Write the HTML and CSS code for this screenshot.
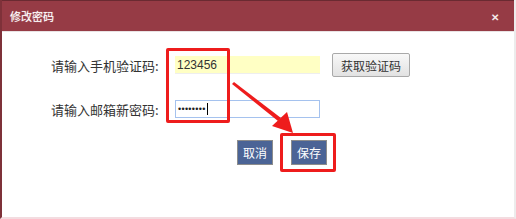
FILE: index.html
```html
<!DOCTYPE html>
<html lang="zh-CN">
<head>
  <meta charset="UTF-8" />
  <title>修改密码</title>
  <link rel="stylesheet" href="styles.css">
</head>
<body>

  <div class="dialog">
    <div class="dialog-header">
      <span class="title">修改密码</span>
      <span class="close">&#x2715;</span>
    </div>

    <div class="dialog-body">
      <div class="form-row">
        <label>请输入手机验证码:</label>
        <div class="field field-code">123456</div>
        <button class="btn-gray">获取验证码</button>
      </div>

      <div class="form-row">
        <label>请输入邮箱新密码:</label>
        <div class="field field-pass"><span class="dots">••••••••</span><span class="caret"></span></div>
      </div>

      <div class="actions">
        <button class="btn-blue">取消</button>
        <button class="btn-blue">保存</button>
      </div>

      <!-- annotations drawn over the form -->
      <div class="mark mark-input"></div>
      <div class="mark mark-save"></div>
      <svg class="arrow" width="80" height="60" viewBox="0 0 80 60">
        <polygon points="1,3 3,1 50,37 47,40" fill="#ee1c1c" />
        <polygon points="62,52 41,45 56,31" fill="#ee1c1c" />
      </svg>
    </div>
  </div>

</body>
</html>
```

FILE: styles.css
```css
* {
  box-sizing: border-box;
}

body {
  margin: 0;
  padding: 0;
  width: 516px;
  height: 219px;
  background: #fff;
  font-family: "Noto Sans CJK SC", "Liberation Sans", sans-serif;
  color: #333;
  overflow: hidden;
}

.dialog {
  width: 516px;
  height: 219px;
  border-left: 2px solid #7e3139;
  border-right: 2px solid #ececec;
  border-bottom: 2px solid #f3dce0;
  display: flex;
  flex-direction: column;
}

.dialog-header {
  height: 32px;
  flex-shrink: 0;
  background: #963b45;
  border-top: 1px solid #6a2a31;
  border-bottom: 1px solid #e9e3e4;
  display: flex;
  align-items: center;
  justify-content: space-between;
  padding: 0 15px 0 8px;
  color: #fff;
}

.title {
  font-size: 11px;
  text-shadow: 0 0 1px rgba(255,255,255,0.6);
}

.close {
  font-size: 10px;
  font-weight: bold;
  color: #f4e8ea;
}

.dialog-body {
  position: relative;
  flex-grow: 1;
  padding: 21px 0 0 49px;
}

.form-row {
  display: flex;
  align-items: center;
  height: 24px;
  margin-bottom: 20px;
}

.form-row label {
  width: 124px;
  font-size: 13px;
  color: #333;
}

.field {
  width: 145px;
  height: 18px;
  font-size: 12px;
  line-height: 18px;
  padding-left: 2px;
  font-family: "Liberation Sans", sans-serif;
}

.field-code {
  background: #ffffc4;
  border-bottom: 1px solid #eeeeee;
  color: #333;
}

.field-pass {
  border: 1px solid #a5c2ee;
  display: flex;
  align-items: center;
  line-height: 16px;
}

.dots {
  font-family: "Liberation Sans", sans-serif;
  font-size: 9px;
  letter-spacing: 0.3px;
  color: #222;
}

.caret {
  width: 1px;
  height: 12px;
  background: #000;
  margin-left: 1px;
}

.btn-gray {
  margin-left: 12px;
  width: 78px;
  height: 24px;
  border: 1px solid #a9a9a9;
  border-radius: 2px;
  background: linear-gradient(#f8f8f8, #e2e2e2);
  font-family: "Noto Sans CJK SC", sans-serif;
  font-size: 12px;
  color: #333;
  padding: 0;
}

.actions {
  display: flex;
  gap: 18px;
  padding-left: 186px;
  margin-top: -1px;
}

.btn-blue {
  width: 36px;
  height: 25px;
  border: 1px solid #8c8c8c;
  background: #4b6496;
  color: #fff;
  font-family: "Noto Sans CJK SC", sans-serif;
  font-size: 12px;
  padding: 0;
}

.mark {
  position: absolute;
  border: 3px solid #ee1c1c;
  border-radius: 2px;
}

.mark-input {
  left: 164px;
  top: 16px;
  width: 64px;
  height: 75px;
}

.mark-save {
  left: 278px;
  top: 101px;
  width: 56px;
  height: 39px;
}

.arrow {
  position: absolute;
  left: 229px;
  top: 49px;
}
```
